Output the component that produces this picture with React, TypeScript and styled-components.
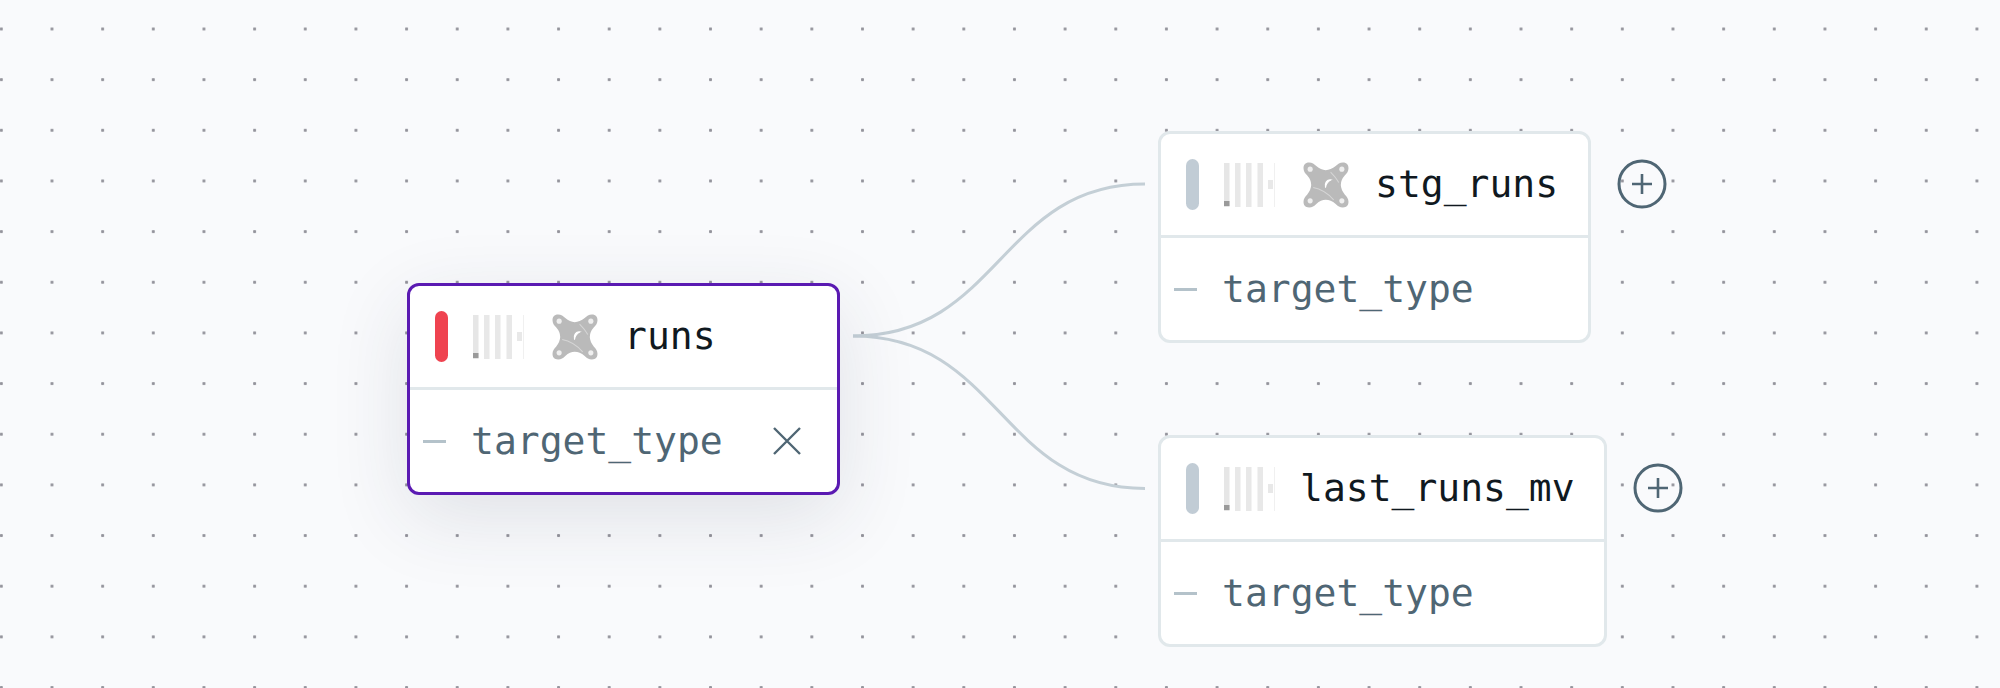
import React from "react";
import styled, { createGlobalStyle } from "styled-components";

const Global = createGlobalStyle`
  html, body { margin: 0; padding: 0; background: #f9fafc; }
`;

const Canvas = styled.div`
  position: relative;
  width: 2000px;
  height: 688px;
  overflow: hidden;
  background-color: #f9fafc;
  background-image: radial-gradient(circle at center, #94949c 1.3px, transparent 1.8px);
  background-size: 50.67px 50.67px;
  background-position: -24px 3.67px;
`;

const Edges = styled.svg`
  position: absolute;
  inset: 0;
  width: 2000px;
  height: 688px;
`;

const Node = styled.div<{ $x: number; $y: number }>`
  position: absolute;
  left: ${(p) => p.$x}px;
  top: ${(p) => p.$y}px;
  display: flex;
  align-items: flex-start;
  gap: 26px;
`;

const Card = styled.div<{ $w: number; $selected?: boolean }>`
  box-sizing: border-box;
  width: ${(p) => p.$w}px;
  height: 212px;
  display: flex;
  flex-direction: column;
  background: #fff;
  border: ${(p) => (p.$selected ? "3px solid #5a1ab2" : "3px solid #e1e8eb")};
  border-radius: 12px;
  box-shadow: ${(p) => (p.$selected ? "0 22px 80px rgba(40, 50, 70, 0.12)" : "none")};
`;

const Header = styled.div`
  box-sizing: border-box;
  height: 104px;
  flex: none;
  display: flex;
  align-items: center;
  padding-left: 25px;
  border-bottom: 3px solid #e1e8eb;
`;

const Status = styled.div<{ $error?: boolean }>`
  width: 13px;
  height: 51px;
  flex: none;
  border-radius: 7px;
  background: ${(p) => (p.$error ? "#ef4350" : "#c1ccd5")};
`;

const SparkSvg = styled.svg`
  flex: none;
  width: 51px;
  height: 44px;
  margin-left: 25px;
`;

const DbtSvg = styled.svg`
  flex: none;
  width: 46px;
  height: 46px;
  margin-left: 28px;
`;

const Name = styled.span<{ $noIcon?: boolean }>`
  margin-left: ${(p) => (p.$noIcon ? 25 : 26)}px;
  margin-top: -2px;
  font-family: "DejaVu Sans Mono", "Liberation Mono", monospace;
  font-size: 38px;
  line-height: 44px;
  color: #10191f;
  white-space: nowrap;
`;

const Row = styled.div`
  flex: 1;
  display: flex;
  align-items: center;
  padding: 0 35px 0 13px;
`;

const Dash = styled.div`
  flex: none;
  width: 23px;
  height: 3px;
  background: #b4c2ca;
`;

const Column = styled.span`
  margin-left: 25px;
  flex: 1;
  font-family: "DejaVu Sans Mono", "Liberation Mono", monospace;
  font-size: 38px;
  line-height: 44px;
  color: #4f6674;
  white-space: nowrap;
`;

const CloseSvg = styled.svg`
  flex: none;
  width: 30px;
  height: 30px;
`;

const PlusSvg = styled.svg`
  flex: none;
  width: 50px;
  height: 50px;
  margin-top: 28px;
`;

function Spark() {
  return (
    <SparkSvg viewBox="0 0 51 44">
      <rect x="0" y="0" width="5.5" height="44" fill="#e6e6e6" />
      <rect x="0" y="38" width="5.5" height="5" fill="#9a9a9a" />
      <rect x="11" y="0" width="5.5" height="44" fill="#e8e8e8" />
      <rect x="22" y="0" width="5.5" height="44" fill="#e8e8e8" />
      <rect x="33.5" y="0" width="5.5" height="44" fill="#e8e8e8" />
      <rect x="44" y="17" width="5" height="9" fill="#e8e8e8" />
      <rect x="50" y="0" width="1" height="44" fill="#f0f0f0" />
    </SparkSvg>
  );
}

function DbtIcon() {
  return (
    <DbtSvg viewBox="0 0 45 45">
      <path
        fill="#bababa"
        d="M6 .5C9 .5 11 2 13 4Q22 12 32 4C34 2 36 .5 39 .5C43 .5 44.5 3 44.5 6C44.5 9 43 11 41 13Q33 22 41 32C43 34 44.5 36 44.5 39C44.5 42 43 44.5 39 44.5C36 44.5 34 43 32 41Q22 33 13 41C11 43 9 44.5 6 44.5C2 44.5 .5 42 .5 39C.5 36 2 34 4 32Q12 22 4 13C2 11 .5 9 .5 6C.5 3 2 .5 6 .5Z"
      />
      <circle cx="7" cy="7" r="2.5" fill="#efefef" />
      <circle cx="38" cy="7" r="2.5" fill="#efefef" />
      <circle cx="7" cy="38" r="2.5" fill="#efefef" />
      <circle cx="38" cy="38" r="2.5" fill="#efefef" />
      <path d="M27.5 17.5C23.5 17 21 20 22 25C22.5 21.5 24.5 19 27.5 17.5Z" fill="#fff" stroke="#fff" strokeWidth="1" />
      <path d="M10 25Q21 27 30 37" fill="none" stroke="#d6d6d6" strokeWidth="1" />
      <path d="M35 20Q32 15 27 10" fill="none" stroke="#d6d6d6" strokeWidth="1" />
    </DbtSvg>
  );
}

function Close() {
  return (
    <CloseSvg viewBox="0 0 30 30">
      <path d="M2 2L28 28M28 2L2 28" stroke="#4f6674" strokeWidth="2.4" fill="none" />
    </CloseSvg>
  );
}

function Plus() {
  return (
    <PlusSvg viewBox="0 0 50 50">
      <circle cx="25" cy="25" r="23" fill="none" stroke="#4f6674" strokeWidth="3" />
      <path d="M15 25H35M25 15V35" stroke="#4f6674" strokeWidth="2.6" fill="none" />
    </PlusSvg>
  );
}

export default function App() {
  return (
    <Canvas>
      <Global />
      <Edges viewBox="0 0 2000 688">
        <path d="M853 336C1000 336 1000 184 1145 184" fill="none" stroke="#c4cfd6" strokeWidth="3" />
        <path d="M853 336C1000 336 1000 488.5 1145 488.5" fill="none" stroke="#c4cfd6" strokeWidth="3" />
      </Edges>

      <Node $x={407} $y={283}>
        <Card $w={433} $selected>
          <Header>
            <Status $error />
            <Spark />
            <DbtIcon />
            <Name>runs</Name>
          </Header>
          <Row>
            <Dash />
            <Column>target_type</Column>
            <Close />
          </Row>
        </Card>
      </Node>

      <Node $x={1158} $y={131}>
        <Card $w={433}>
          <Header>
            <Status />
            <Spark />
            <DbtIcon />
            <Name>stg_runs</Name>
          </Header>
          <Row>
            <Dash />
            <Column>target_type</Column>
          </Row>
        </Card>
        <Plus />
      </Node>

      <Node $x={1158} $y={435}>
        <Card $w={449}>
          <Header>
            <Status />
            <Spark />
            <Name $noIcon>last_runs_mv</Name>
          </Header>
          <Row>
            <Dash />
            <Column>target_type</Column>
          </Row>
        </Card>
        <Plus />
      </Node>
    </Canvas>
  );
}
